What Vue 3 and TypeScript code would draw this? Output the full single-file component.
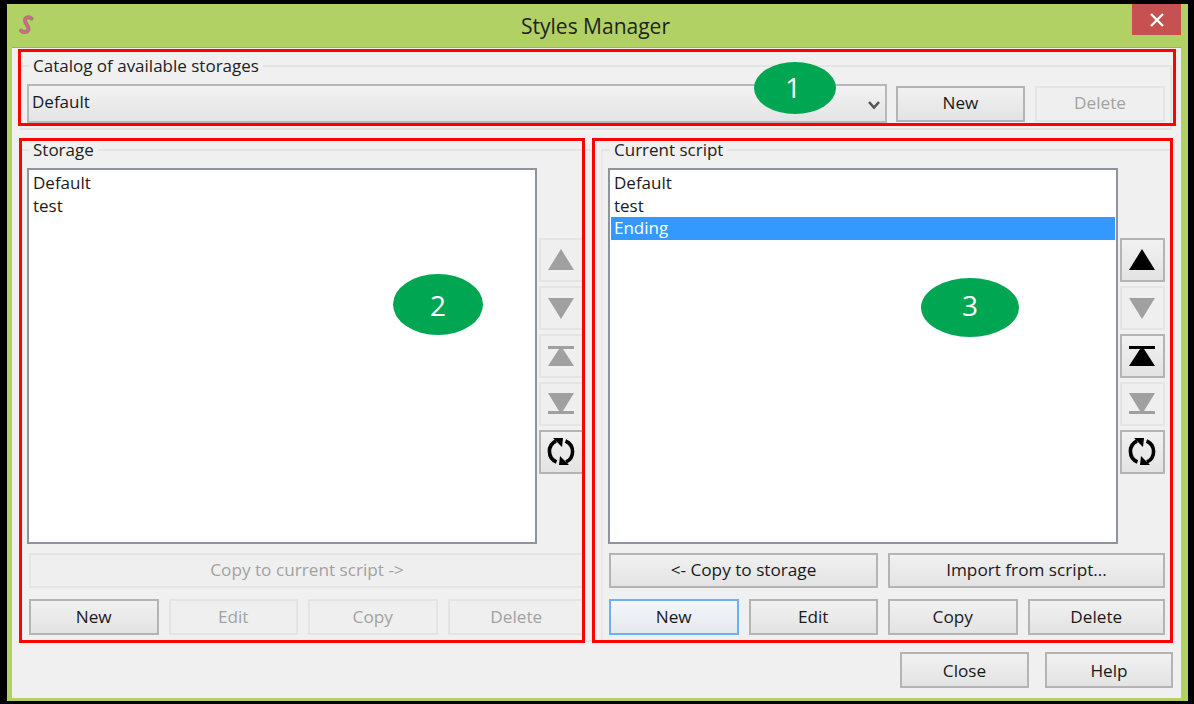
<template>
  <div class="frame">
    <div class="titlebar">
      <svg class="logo" width="32" height="32" viewBox="0 0 32 32" fill="none" stroke-linecap="round">
        <path d="M19.5 10.5C17 8.5 13 9 13 12.5 13 16 17 18 16.5 21 16 24.5 11 25 9 22.5" stroke="#7d8f5a" stroke-width="4" />
        <path d="M19.5 10.5C17 8.5 13 9 13 12.5 13 16 17 18 16.5 21 16 24.5 11 25 9 22.5" stroke="#e0608f" stroke-width="2.4" />
      </svg>
      <span class="title">Styles Manager</span>
      <button class="close-x" aria-label="Close">
        <svg width="16" height="16" viewBox="0 0 16 16"><path d="M2 2 14 14M14 2 2 14" stroke="#fff" stroke-width="2.4" fill="none" /></svg>
      </button>
    </div>

    <div class="content">
      <fieldset class="group">
        <legend>Catalog of available storages</legend>
        <div class="catalog-row">
          <div class="combo">
            <span>Default</span>
            <svg width="14" height="10" viewBox="0 0 14 10"><path d="M2 2 7 7.5 12 2" stroke="#555" stroke-width="2.6" fill="none" /></svg>
          </div>
          <button class="btn catalog-btn">New</button>
          <button class="btn catalog-btn wide" disabled>Delete</button>
        </div>
      </fieldset>

      <div class="panes">
        <fieldset v-for="pane in panes" :key="pane.title" class="group pane" :class="pane.cls">
          <legend>{{ pane.title }}</legend>
          <div class="list-row">
            <ul class="list">
              <li v-for="item in pane.items" :key="item" :class="{ selected: item === 'Ending' }">{{ item }}</li>
            </ul>
            <div class="side">
              <button v-for="m in pane.moves" :key="m.icon" class="btn side-btn" :disabled="m.off">
                <svg width="44" height="44" viewBox="0 0 44 44" :fill="m.off ? '#a0a0a0' : '#000'">
                  <path v-if="m.icon === 'up'" d="M22 11 35 32H9Z" />
                  <path v-else-if="m.icon === 'down'" d="M9 12H35L22 33Z" />
                  <path v-else-if="m.icon === 'top'" d="M9 12H35V15H24L35 32H9L20 15H9Z" />
                  <path v-else-if="m.icon === 'bottom'" d="M9 11H35L24 29H35V32H9V29H20Z" />
                  <template v-else>
                    <path d="M17.5 32A11.5 11.5 0 0 1 17 11M26.5 11A11.5 11.5 0 0 1 27 32" fill="none" stroke="#000" stroke-width="3.6" />
                    <path d="M14 8H24L23 17ZM30 35H20L21 26Z" />
                  </template>
                </svg>
              </button>
            </div>
          </div>
          <div class="actions">
            <button class="btn span2" :class="{ fullw: pane.transfer.length === 1 }" v-for="t in pane.transfer" :key="t.label" :disabled="t.off">{{ t.label }}</button>
            <button v-for="a in pane.actions" :key="a.label" class="btn" :class="{ focused: a.focus }" :disabled="a.off">{{ a.label }}</button>
          </div>
        </fieldset>
      </div>

      <div class="footer">
        <button class="btn footer-btn">Close</button>
        <button class="btn footer-btn">Help</button>
      </div>
    </div>

    <!-- annotations drawn on top of the screenshot -->
    <div class="mark mark-1"></div>
    <div class="mark mark-2"></div>
    <div class="mark mark-3"></div>
    <div class="oval oval-1">1</div>
    <div class="oval oval-2">2</div>
    <div class="oval oval-3">3</div>
  </div>
</template>

<script setup lang="ts">
interface Move {
  icon: string
  off: boolean
}
interface Action {
  label: string
  off?: boolean
  focus?: boolean
}
interface Pane {
  title: string
  cls: string
  items: string[]
  moves: Move[]
  transfer: Action[]
  actions: Action[]
}

const panes: Pane[] = [
  {
    title: 'Storage',
    cls: 'pane-left',
    items: ['Default', 'test'],
    moves: [
      { icon: 'up', off: true },
      { icon: 'down', off: true },
      { icon: 'top', off: true },
      { icon: 'bottom', off: true },
      { icon: 'refresh', off: false }
    ],
    transfer: [{ label: 'Copy to current script ->', off: true }],
    actions: [
      { label: 'New' },
      { label: 'Edit', off: true },
      { label: 'Copy', off: true },
      { label: 'Delete', off: true }
    ]
  },
  {
    title: 'Current script',
    cls: 'pane-right',
    items: ['Default', 'test', 'Ending'],
    moves: [
      { icon: 'up', off: false },
      { icon: 'down', off: true },
      { icon: 'top', off: false },
      { icon: 'bottom', off: true },
      { icon: 'refresh', off: false }
    ],
    transfer: [{ label: '<- Copy to storage' }, { label: 'Import from script...' }],
    actions: [
      { label: 'New', focus: true },
      { label: 'Edit' },
      { label: 'Copy' },
      { label: 'Delete' }
    ]
  }
]
</script>

<style>
html,
body {
  margin: 0;
  background: #000;
}
</style>

<style scoped>
.frame {
  position: relative;
  box-sizing: border-box;
  width: 1181px;
  height: 697px;
  margin: 4px 6px 3px 7px;
  padding: 0 7px 3px 5px;
  background: #b2d165;
  font-family: "Open Sans", "Liberation Sans", sans-serif;
  font-size: 17px;
  color: #1a1a1a;
  display: flex;
  flex-direction: column;
}

.titlebar {
  position: relative;
  height: 43px;
  flex: none;
  display: flex;
  align-items: center;
  justify-content: center;
}

.logo {
  position: absolute;
  left: 0;
  top: 4px;
}

.title {
  font-size: 21px;
  color: #222;
  margin-top: 1px;
  margin-left: -2px;
}

.close-x {
  position: absolute;
  top: 0;
  right: 0;
  width: 49px;
  height: 31px;
  border: 0;
  padding: 0;
  background: #c75050;
  display: flex;
  align-items: center;
  justify-content: center;
}

.content {
  flex: 1;
  background: #f0f0f0;
  border-top: 1px solid #9db35c;
  box-sizing: border-box;
  padding: 6px 9px 9px 8px;
  display: flex;
  flex-direction: column;
}

.group {
  margin: 0;
  min-width: 0;
  border: 2px solid #e4e4e4;
  border-left-color: #e8e8e8;
  padding: 6px 5px 5px;
}

legend {
  margin-left: 2px;
  padding: 0 4px;
  line-height: 24px;
  font-size: 17px;
  color: #222;
}

.catalog-row {
  display: flex;
  align-items: center;
  gap: 9px;
  height: 39px;
}

.combo {
  flex: 1;
  height: 39px;
  box-sizing: border-box;
  border: 2px solid #b8b8b8;
  background: linear-gradient(#f2f2f2, #e4e4e4);
  display: flex;
  align-items: center;
  justify-content: space-between;
  padding: 0 4px 5px 3px;
}

.combo svg {
  margin-top: 7px;
}

.btn {
  font: inherit;
  font-size: 17.2px;
  color: #1a1a1a;
  height: 36px;
  padding: 0 0 2px;
  box-sizing: border-box;
  border: 2px solid #b4b4b4;
  background: linear-gradient(#f1f1f1, #e3e3e3);
}

.btn:disabled {
  border-color: #e4e4e4;
  background: #efefef;
  color: #a2a2a2;
}

.btn.focused {
  border-color: #6cb0f2;
  background: linear-gradient(#f3f6fa, #e6e9ec);
}

.catalog-btn {
  width: 129px;
}

.catalog-btn.wide {
  width: 130px;
  margin-left: 1px;
}

.panes {
  display: grid;
  grid-template-columns: 573px 571px;
  column-gap: 8px;
  margin-top: 8px;
}

.pane {
  padding-bottom: 5px;
}

.pane-left {
  padding-right: 6px;
}

.list-row {
  display: flex;
  gap: 2px;
}

.list {
  width: 510px;
  height: 376px;
  flex: none;
  box-sizing: border-box;
  margin: 0;
  padding: 2px 1px;
  list-style: none;
  background: #fff;
  border: 2px solid #8f949c;
}

.list li {
  height: 22.5px;
  line-height: 22px;
  padding-left: 3px;
  color: #1a1a1a;
}

.list li.selected {
  background: #3399ff;
  color: #fff;
}

.side {
  flex: 1;
  display: flex;
  flex-direction: column;
  justify-content: center;
  gap: 4px;
}

.side-btn {
  width: 100%;
  height: 44px;
  display: block;
  padding: 0;
}

.side-btn svg {
  display: block;
  margin: -2px;
}

.actions {
  display: grid;
  grid-template-columns: 129.5px 129.5px 129.5px 1fr;
  gap: 11px 10px;
  margin-top: 9px;
}

.pane-left .actions {
  margin-left: 2px;
}

.pane-right .actions {
  margin-left: 1px;
}

.span2 {
  grid-column: span 2;
  height: 35px;
}

.span2.fullw {
  grid-column: 1 / -1;
}

.footer {
  display: flex;
  justify-content: flex-end;
  gap: 16px;
  margin-top: 10px;
  margin-right: -1px;
}

.footer-btn {
  width: 129px;
  padding-bottom: 0;
}

.footer-btn:last-child {
  width: 128px;
}

.mark {
  position: absolute;
  box-sizing: border-box;
  border: 3px solid #f00;
  pointer-events: none;
}

.mark-1 {
  left: 11px;
  top: 45px;
  width: 1158px;
  height: 77px;
}

.mark-2 {
  left: 12px;
  top: 134px;
  width: 566px;
  height: 505px;
}

.mark-3 {
  left: 585px;
  top: 134px;
  width: 581px;
  height: 505px;
}

.oval {
  position: absolute;
  box-sizing: border-box;
  border-radius: 50%;
  background: #00a651;
  color: #fff;
  font-size: 28px;
  display: flex;
  align-items: center;
  justify-content: center;
}

.oval-1 {
  left: 747px;
  top: 58px;
  width: 82px;
  height: 52px;
  padding: 0 4px 2px 0;
}

.oval-2 {
  left: 386px;
  top: 270px;
  width: 90px;
  height: 61px;
}

.oval-3 {
  left: 914px;
  top: 274px;
  width: 98px;
  height: 59px;
  padding-bottom: 5px;
}
</style>
